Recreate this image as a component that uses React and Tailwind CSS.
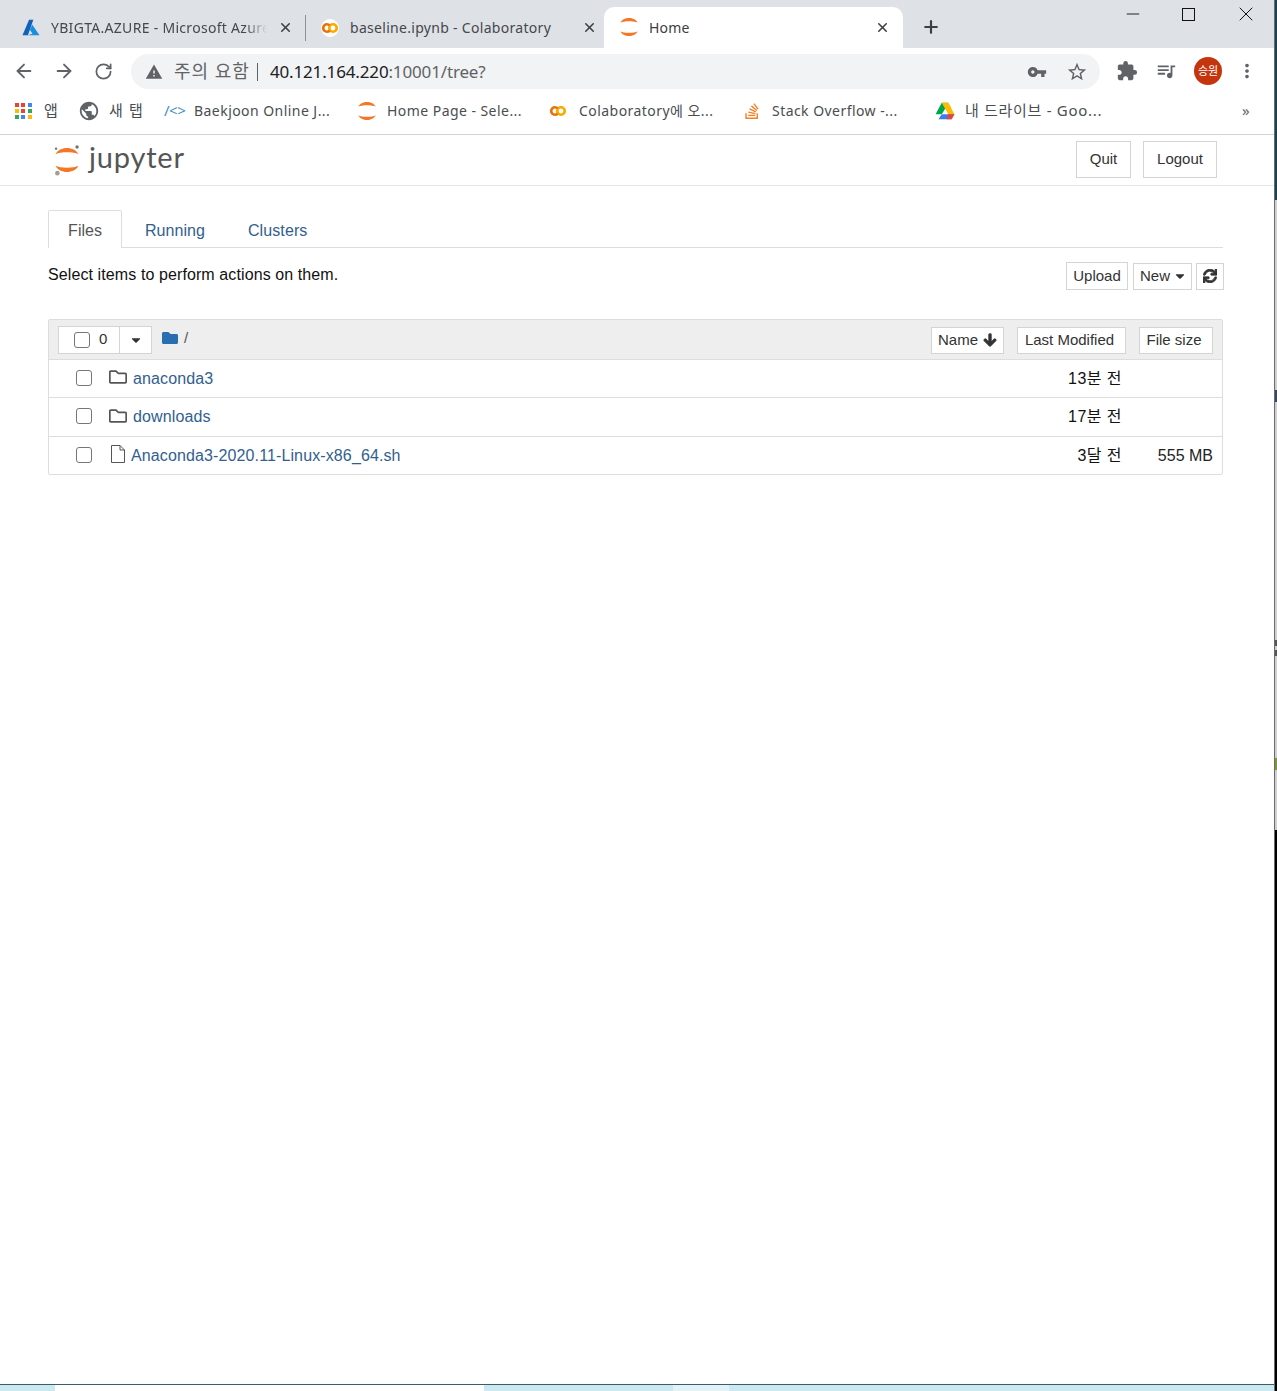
import React from "react";
import { ArrowLeft, ArrowRight, RotateCw, Plus, X, Minus } from "lucide-react";
import { FaFolder, FaRegFolder, FaArrowDown, FaSync, FaCaretDown, FaStackOverflow } from "react-icons/fa";
import { MdStarBorder, MdExtension, MdVpnKey, MdQueueMusic, MdMoreVert, MdPublic, MdWarning } from "react-icons/md";

const JupyterMark = ({ className, dots }) => (
  <svg viewBox="0 0 32 36" className={className}>
    <path d="M3 11.5C7 2 25 2 29 11.5C24 8.5 8 8.5 3 11.5Z" fill="#f37726" />
    <path d="M3 24.5C7 34 25 34 29 24.5C24 27.5 8 27.5 3 24.5Z" fill="#f37726" />
    {dots && (
      <>
        <circle cx="27.5" cy="3" r="2" fill="#767677" />
        <circle cx="3.5" cy="5" r="1.4" fill="#767677" />
        <circle cx="5" cy="33" r="2.6" fill="#9e9e9e" />
      </>
    )}
  </svg>
);

const Colab = () => (
  <svg viewBox="0 0 24 24" className="w-[18px] h-[18px] shrink-0">
    <circle cx="16" cy="12" r="5" fill="none" stroke="#f9ab00" strokeWidth="3.6" />
    <path d="M11.5 8.5A5 5 0 1 0 11.5 15.5" fill="none" stroke="#e8710a" strokeWidth="3.6" />
  </svg>
);

const Azure = () => (
  <svg viewBox="0 0 24 22" className="w-[20px] h-[17px] shrink-0">
    <path d="M9.5 1H15L8 21H1Z" fill="#0f62b8" />
    <path d="M13.5 7L23 21H7.5L14 19L10.5 14Z" fill="#1a8fdc" />
  </svg>
);

const Drive = () => (
  <svg viewBox="0 0 24 22" className="w-[20px] h-[18px] shrink-0">
    <path d="M8 1H16L12 8.5Z M8 1L12 8.5L8 15H0.5Z" fill="#00a74a" />
    <path d="M8 1H16L20 8H12Z" fill="#fbbc04" />
    <path d="M16 1L23.5 15H16L12 8Z" fill="#fbbc04" />
    <path d="M8 15H23.5L20 21H4Z" fill="#3a7df0" />
    <path d="M16 15H23.5L20 21H14Z" fill="#ea4335" />
  </svg>
);

const FileOutline = () => (
  <svg viewBox="0 0 16 18" className="w-[16px] h-[18px]" fill="none" stroke="#555555" strokeWidth="1">
    <path d="M1.5 0.5H10L14.5 5V17.5H1.5Z" />
    <path d="M10 0.5V5H14.5" />
  </svg>
);

const AppsGrid = () => {
  const c = ["#ea4335", "#ea4335", "#4285f4", "#fbbc04", "#ea4335", "#34a853", "#34a853", "#4285f4", "#fbbc04"];
  return (
    <div className="grid grid-cols-3 gap-[2px] w-[17px] shrink-0">
      {c.map((x, i) => (
        <span key={i} className="w-[4px] h-[4px]" style={{ background: x }} />
      ))}
    </div>
  );
};

const Bookmark = ({ icon, label, className, textClass = "text-[14px] tracking-[0.45px]" }) => (
  <div className={`flex items-center shrink-0 ${className}`}>
    {icon}
    <span className={`text-[#4a4d51] whitespace-nowrap ${textClass}`}>{label}</span>
  </div>
);

const Btn = ({ className, children }) => (
  <div className={`flex items-center justify-center border border-[#d4d4d4] bg-white text-[#333333] text-[15px] leading-none pb-[2px] ${className}`}>
    {children}
  </div>
);

const Check = ({ className = "" }) => (
  <span className={`block w-[16px] h-[16px] rounded-[3px] border border-[#767676] bg-white ${className}`} />
);

const Row = ({ icon, name, gapClass, time, size, height }) => (
  <div className={`flex items-center border-t border-[#dddddd] ${height}`}>
    <Check className="ml-[27px] -mt-[2px] shrink-0" />
    <div className="ml-[17px] w-[18px] -mr-[2px] shrink-0 flex justify-center text-[#555555] -mt-[3px]">{icon}</div>
    <span className={`${gapClass} text-[16px] tracking-[0.12px] text-[#31608f] whitespace-nowrap`}>{name}</span>
    <span className="ml-auto mr-[100px] text-[16px] tracking-[0.45px] text-[#111111] whitespace-nowrap">{time}</span>
    {size ? <span className="absolute right-[9px] text-[16px] text-[#222222]">{size}</span> : null}
  </div>
);

export default function App() {
  return (
    <div className="w-[1277px] h-[1391px] overflow-hidden flex bg-white font-['Liberation_Sans','Noto_Sans_CJK_KR',sans-serif]">
      <div className="w-[1274px] shrink-0 h-full flex flex-col">
        {/* tab strip */}
        <div className="h-[48px] bg-[#dee1e6] flex items-end shrink-0 relative font-['Noto_Sans','Noto_Sans_CJK_KR',sans-serif]">
          <div className="w-[305px] h-[41px] flex items-center pl-[21px] pr-[11px]">
            <Azure />
            <span className="ml-[10px] w-[216px] overflow-hidden whitespace-nowrap text-[14px] tracking-[0.3px] text-[#45484c] [mask-image:linear-gradient(to_right,black_90%,transparent)]">YBIGTA.AZURE - Microsoft Azure</span>
            <X size={15} strokeWidth={2.5} className="ml-[11px] text-[#3c4043] shrink-0" />
          </div>
          <div className="w-[1px] h-[26px] bg-[#8f9296] mb-[7px] shrink-0" />
          <div className="w-[298px] h-[41px] flex items-center pl-[15px]">
            <span className="w-[18px] h-[18px] rounded-full bg-white flex items-center justify-center"><Colab /></span>
            <span className="ml-[11px] w-[233px] whitespace-nowrap text-[14px] tracking-[0.3px] text-[#45484c]">baseline.ipynb - Colaboratory</span>
            <X size={15} strokeWidth={2.5} className="-ml-[1px] text-[#3c4043] shrink-0" />
          </div>
          <div className="w-[299px] h-[42px] -mb-[1px] bg-white rounded-t-[10px] flex items-center pl-[14px] pb-[2px]">
            <JupyterMark className="w-[22px] h-[24px] shrink-0" />
            <span className="ml-[9px] w-[226px] text-[14px] tracking-[0.2px] text-[#3c4043]">Home</span>
            <X size={15} strokeWidth={2.5} className="text-[#3c4043] shrink-0" />
          </div>
          <Plus size={20} strokeWidth={2.6} className="ml-[18px] mb-[11px] text-[#3c4043]" />
          <Minus size={20} strokeWidth={1.1} className="absolute left-[1123px] top-[4px] text-[#111111]" />
          <div className="absolute left-[1182px] top-[8px] w-[13px] h-[13px] border border-[#111111]" />
          <X size={24} strokeWidth={1} className="absolute left-[1234px] top-[2px] text-[#111111]" />
        </div>
        {/* toolbar */}
        <div className="h-[43px] bg-white flex items-center shrink-0 pl-[13px] pt-[3px] font-['Noto_Sans','Noto_Sans_CJK_KR',sans-serif]">
          <ArrowLeft size={22} strokeWidth={2} className="text-[#5f6368]" />
          <ArrowRight size={22} strokeWidth={2} className="ml-[18px] text-[#5f6368]" />
          <RotateCw size={19} strokeWidth={2.2} className="ml-[19px] text-[#5f6368]" />
          <div className="ml-[18px] w-[969px] h-[35px] mt-[1px] rounded-full bg-[#f1f3f4] flex items-center pl-[14px] pr-[12px]">
            <MdWarning size={18} className="text-[#5f6368] shrink-0" />
            <span className="ml-[11px] text-[18px] tracking-[1px] text-[#5f6368] whitespace-nowrap">주의 요함</span>
            <span className="ml-[7px] w-[1px] h-[18px] bg-[#5f6368]" />
            <span className="ml-[12px] text-[17px] text-[#202124] whitespace-nowrap tracking-[-0.15px]">40.121.164.220<span className="text-[#5f6368]">:10001/tree?</span></span>
            <MdVpnKey size={20} className="ml-auto mr-[19px] text-[#5f6368]" />
            <MdStarBorder size={22} className="text-[#5f6368]" />
          </div>
          <MdExtension size={22} className="ml-[16px] text-[#5f6368]" />
          <MdQueueMusic size={22} className="ml-[17px] text-[#5f6368]" />
          <div className="ml-[17px] w-[28px] h-[28px] rounded-full bg-[#c5350d] text-white text-[11px] flex items-center justify-center">승원</div>
          <MdMoreVert size={22} className="ml-[14px] text-[#5f6368]" />
        </div>
        {/* bookmarks */}
        <div className="h-[44px] bg-white border-b border-[#d4d4d4] flex items-center shrink-0 pl-[15px] pb-[4px] font-['Noto_Sans','Noto_Sans_CJK_KR',sans-serif]">
          <Bookmark className="w-[64px]" textClass="text-[15px]" icon={<span className="mr-[12px]"><AppsGrid /></span>} label="앱" />
          <Bookmark className="w-[85px]" textClass="text-[15px] tracking-[1.2px]" icon={<MdPublic size={22} className="-ml-[1px] mr-[9px] text-[#5f6368]" />} label="새 탭" />
          <Bookmark className="w-[192px]" icon={<span className="w-[30px] text-[15px] text-[#3f8fc4] tracking-[-0.5px]">/&lt;&gt;</span>} label="Baekjoon Online J..." />
          <Bookmark className="w-[193px]" icon={<JupyterMark className="w-[22px] h-[24px] mr-[9px] shrink-0" />} label="Home Page - Sele..." />
          <Bookmark className="w-[194px]" icon={<span className="mr-[12px]"><Colab /></span>} label="Colaboratory에 오..." />
          <Bookmark className="w-[192px]" icon={<FaStackOverflow size={18} className="mr-[11px] text-[#f48024]" />} label="Stack Overflow -..." />
          <Bookmark className="w-[307px]" textClass="text-[15px] tracking-[0.7px]" icon={<span className="mr-[10px]"><Drive /></span>} label="내 드라이브 - Goo..." />
          <span className="text-[15px] text-[#5f6368]">»</span>
        </div>
        {/* jupyter header */}
        <div className="h-[51px] border-b border-[#e7e7e7] flex items-center shrink-0 pl-[53px] pr-[57px]">
          <JupyterMark dots className="w-[28px] h-[36px] shrink-0" />
          <span className="ml-[8px] -mt-[8px] text-[29px] leading-none tracking-[0.8px] text-[#555555] font-['Lato',sans-serif]">jupyter</span>
          <Btn className="ml-auto -mt-[2px] w-[55px] h-[37px]">Quit</Btn>
          <Btn className="ml-[12px] -mt-[2px] w-[74px] h-[37px]">Logout</Btn>
        </div>
        {/* content */}
        <div className="pl-[48px] w-[1224px] shrink-0">
          <div className="mt-[24px] h-[38px] flex items-stretch border-b border-[#dddddd] w-[1175px]">
            <div className="w-[74px] h-[38px] border border-b-0 border-[#dddddd] bg-white text-[#555555] text-[16px] flex items-center justify-center pt-[2px] rounded-t-[2px]">Files</div>
            <span className="ml-[23px] self-center mt-[4px] text-[16px] tracking-[0.05px] text-[#31608f]">Running</span>
            <span className="ml-[43px] self-center mt-[4px] text-[16px] tracking-[0.1px] text-[#31608f]">Clusters</span>
          </div>
          <div className="mt-[14px] h-[30px] flex items-start">
            <span className="mt-[1px] text-[16px] tracking-[0.1px] text-[#111111] whitespace-nowrap">Select items to perform actions on them.</span>
            <Btn className="ml-auto w-[62px] h-[28px]">Upload</Btn>
            <Btn className="ml-[5px] mt-[1px] w-[59px] h-[27px] gap-[3px] pl-[2px]">New<FaCaretDown size={14} /></Btn>
            <Btn className="ml-[4px] mt-[1px] w-[28px] h-[27px]"><FaSync size={14} stroke="currentColor" strokeWidth={30} /></Btn>
          </div>
          <div className="mt-[27px] w-[1175px] border border-[#dddddd] rounded-[2px]">
            <div className="h-[39px] bg-[#eeeeee] flex items-center pl-[9px] pr-[9px]">
              <div className="w-[62px] h-[28px] bg-white border border-[#d4d4d4] flex items-center pl-[15px]">
                <Check />
                <span className="ml-[9px] text-[15px] text-[#333333]">0</span>
              </div>
              <div className="w-[33px] h-[28px] -ml-[1px] bg-white border border-[#d4d4d4] flex items-center justify-center text-[#333333]"><FaCaretDown size={14} /></div>
              <FaFolder size={16} className="ml-[10px] -mt-[3px] text-[#2a6db0]" />
              <span className="ml-[6px] -mt-[3px] text-[15px] text-[#555555]">/</span>
              <Btn className="ml-auto mt-[2px] w-[73px] h-[27px] gap-[5px]">Name<FaArrowDown size={14} stroke="currentColor" strokeWidth={40} /></Btn>
              <Btn className="ml-[13px] mt-[2px] w-[109px] h-[27px] pr-[4px]">Last Modified</Btn>
              <Btn className="ml-[13px] mt-[2px] w-[74px] h-[27px] pr-[4px]">File size</Btn>
            </div>
            <div className="flex flex-col">
              <Row height="h-[38px]" icon={<FaRegFolder size={18} />} name="anaconda3" gapClass="ml-[8px]" time="13분 전" />
              <Row height="h-[39px]" icon={<FaRegFolder size={18} />} name="downloads" gapClass="ml-[8px]" time="17분 전" />
              <div className="relative">
                <Row height="h-[38px]" icon={<FileOutline />} name="Anaconda3-2020.11-Linux-x86_64.sh" gapClass="ml-[6px]" time="3달 전" size="555 MB" />
              </div>
            </div>
          </div>
        </div>
        {/* taskbar edge */}
        <div className="mt-auto h-[7px] border-t border-[#37606a] bg-[#cde9f0] flex shrink-0">
          <div className="w-[55px]" />
          <div className="w-[429px] bg-white" />
          <div className="w-[189px]" />
          <div className="w-[56px] bg-[#e3f2f6]" />
        </div>
      </div>
      {/* window behind */}
      <div className="w-[3px] h-full flex flex-col border-l border-[#6b6b6b]">
        <div className="h-[200px] bg-[#17444f]" />
        <div className="h-[190px] bg-[#d0d0d0]" />
        <div className="h-[12px] bg-[#3a4a5a]" />
        <div className="h-[238px] bg-[#d0d0d0]" />
        <div className="h-[6px] bg-[#555555]" />
        <div className="h-[4px] bg-[#d0d0d0]" />
        <div className="h-[6px] bg-[#555555]" />
        <div className="h-[102px] bg-[#d0d0d0]" />
        <div className="h-[12px] bg-[#7a9a3a]" />
        <div className="h-[60px] bg-[#d0d0d0]" />
        <div className="flex-1 bg-black" />
      </div>
    </div>
  );
}
